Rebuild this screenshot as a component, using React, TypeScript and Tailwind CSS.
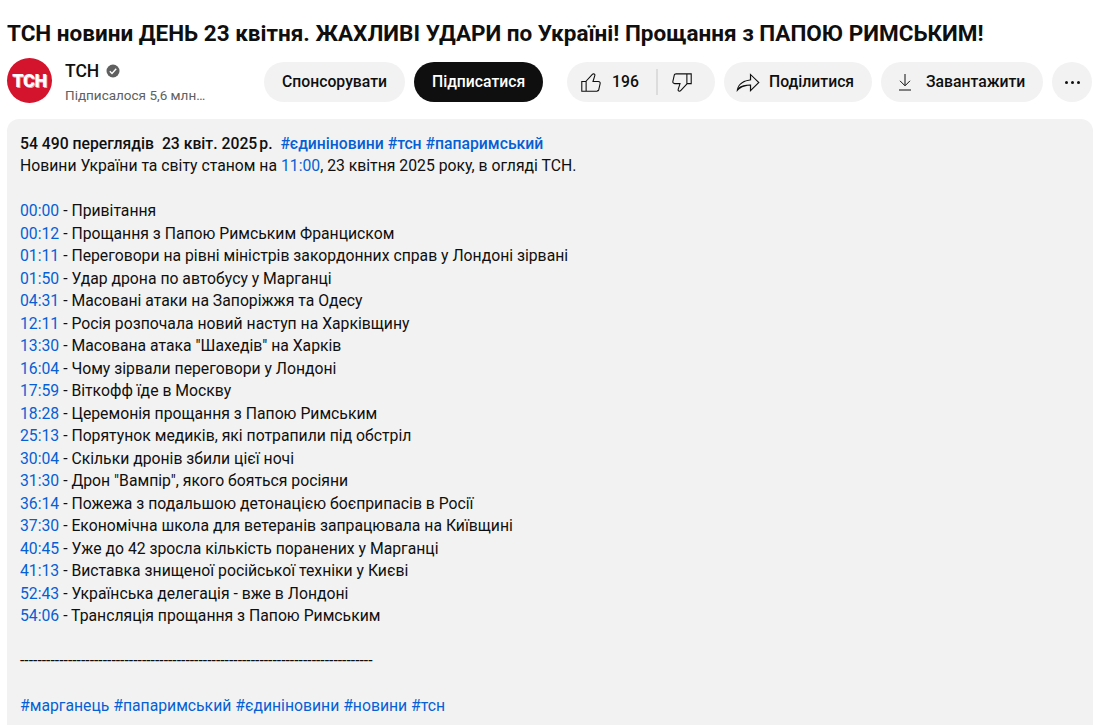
import React from "react";

const chapters: [string, string][] = [
  ["00:00", "Привітання"],
  ["00:12", "Прощання з Папою Римським Франциском"],
  ["01:11", "Переговори на рівні міністрів закордонних справ у Лондоні зірвані"],
  ["01:50", "Удар дрона по автобусу у Марганці"],
  ["04:31", "Масовані атаки на Запоріжжя та Одесу"],
  ["12:11", "Росія розпочала новий наступ на Харківщину"],
  ["13:30", "Масована атака \"Шахедів\" на Харків"],
  ["16:04", "Чому зірвали переговори у Лондоні"],
  ["17:59", "Віткофф їде в Москву"],
  ["18:28", "Церемонія прощання з Папою Римським"],
  ["25:13", "Порятунок медиків, які потрапили під обстріл"],
  ["30:04", "Скільки дронів збили цієї ночі"],
  ["31:30", "Дрон \"Вампір\", якого бояться росіяни"],
  ["36:14", "Пожежа з подальшою детонацією боєприпасів в Росії"],
  ["37:30", "Економічна школа для ветеранів запрацювала на Київщині"],
  ["40:45", "Уже до 42 зросла кількість поранених у Марганці"],
  ["41:13", "Виставка знищеної російської техніки у Києві"],
  ["52:43", "Українська делегація - вже в Лондоні"],
  ["54:06", "Трансляція прощання з Папою Римським"],
];

const LikeIcon = () => (
  <svg width="26" height="26" viewBox="0 0 24 24" fill="#0f0f0f">
    <path d="M18.77,11h-4.23l1.52-4.94C16.38,5.03,15.54,4,14.38,4c-0.58,0-1.14,0.24-1.52,0.65L7,11H3v10h4h1h9.43c1.06,0,1.98-0.67,2.19-1.61l1.34-6C21.23,12.15,20.18,11,18.77,11z M7,20H4v-8h3V20z M19.98,13.17l-1.34,6C18.54,19.65,18.03,20,17.43,20H8v-8.61l5.6-6.06C13.79,5.12,14.08,5,14.38,5c0.26,0,0.5,0.11,0.63,0.3c0.07,0.1,0.15,0.26,0.09,0.47l-1.52,4.94L13.18,12h1.35h4.23c0.41,0,0.8,0.17,1.03,0.46C19.92,12.61,20.05,12.86,19.98,13.17z" />
  </svg>
);

const DislikeIcon = () => (
  <svg width="26" height="26" viewBox="0 0 24 24" fill="#0f0f0f">
    <path d="M17,4h-1H6.57C5.5,4,4.59,4.67,4.38,5.61l-1.34,6C2.77,12.85,3.82,14,5.23,14h4.23l-1.52,4.94C7.62,19.97,8.46,21,9.62,21c0.58,0,1.14-0.24,1.52-0.65L17,14h4V4H17z M10.4,19.67C10.21,19.88,9.92,20,9.62,20c-0.26,0-0.5-0.11-0.63-0.3c-0.07-0.1-0.15-0.26-0.09-0.47l1.52-4.94l0.4-1.29H9.46H5.23c-0.41,0-0.8-0.17-1.03-0.46c-0.12-0.15-0.25-0.4-0.18-0.72l1.34-6C5.46,5.35,5.97,5,6.57,5H16v8.61L10.4,19.67z M20,13h-3V5h3V13z" />
  </svg>
);

export default function App() {
  return (
    <div className="w-[1107px] h-[725px] overflow-hidden bg-white font-['Roboto',sans-serif] text-[#0f0f0f]">
      <h1 className="pl-[7px] pt-[19px] text-[22.5px] leading-[28px] font-bold whitespace-nowrap">
        ТСН новини ДЕНЬ 23 квітня. ЖАХЛИВІ УДАРИ по Україні! Прощання з ПАПОЮ РИМСЬКИМ!
      </h1>
      <div className="flex items-center pl-[7px] pr-[15px] mt-[11px] h-[48px]">
        <div className="self-start w-[45px] h-[45px] rounded-full bg-[#d4132c] flex items-center justify-center shrink-0">
          <span className="text-white font-black text-[18px] leading-none tracking-[-0.4px] [text-shadow:1px_1px_0_#f3a6b0]">ТСН</span>
        </div>
        <div className="self-start mt-[1px] ml-[14px] w-[190px] shrink-0">
          <div className="flex items-center gap-[7px] h-[24px] -ml-[1px]">
            <span className="text-[17.5px] font-medium leading-[24px]">ТСН</span>
            <svg width="14" height="14" viewBox="0 0 14 14">
              <circle cx="7" cy="7" r="6.5" fill="#606060" />
              <path d="M3.8 7.2 6 9.4l4.2-4.6" fill="none" stroke="#fff" strokeWidth="1.4" />
            </svg>
          </div>
          <div className="text-[13.5px] leading-[18px] text-[#606060] mt-[3px] -ml-[1px]">Підписалося 5,6 млн…</div>
        </div>
        <button className="h-[40px] ml-[8px] px-[18px] rounded-full bg-[#f2f2f2] text-[15.75px] font-medium whitespace-nowrap">Спонсорувати</button>
        <button className="h-[40px] ml-[9px] px-[18px] rounded-full bg-[#0f0f0f] text-white text-[15.75px] font-medium whitespace-nowrap">Підписатися</button>
        <div className="ml-auto flex items-center gap-[9px]">
          <div className="flex items-center h-[40px] w-[148px] rounded-full bg-[#f2f2f2]">
            <span className="ml-[11px] flex"><LikeIcon /></span>
            <span className="ml-[8px] text-[15.75px] font-medium w-[44px]">196</span>
            <span className="w-[2px] h-[26px] bg-[#dcdcdc]" />
            <span className="ml-[11px] flex"><DislikeIcon /></span>
          </div>
          <button className="flex items-center h-[40px] w-[148px] pl-[9px] rounded-full bg-[#f2f2f2] text-[15.75px] font-medium">
            <svg width="29" height="25" viewBox="0 0 24 24" preserveAspectRatio="none" fill="#0f0f0f">
              <path d="M15,5.63L20.66,12L15,18.37V14h-1c-3.96,0-7.14,1-9.75,3.09c1.84-4.07,5.11-6.4,9.89-7.1L15,9.86V5.63 M14,3v6C6,10.17,3.25,15.17,3,21c2.83-4,6-6,11-6v6l8-9L14,3L14,3z" />
            </svg>
            <span className="ml-[7px]">Поділитися</span>
          </button>
          <button className="flex items-center h-[40px] w-[162px] pl-[12px] rounded-full bg-[#f2f2f2] text-[15.75px] font-medium">
            <svg width="24" height="24" viewBox="0 0 24 24" fill="none" stroke="#0f0f0f" strokeWidth="1">
              <path d="M12 4v11.5M7 10.8l5 5 5-5M6 20h12" />
            </svg>
            <span className="ml-[9px]">Завантажити</span>
          </button>
          <button className="flex items-center justify-center gap-[3px] w-[40px] h-[40px] rounded-full bg-[#f2f2f2]">
            <span className="w-[3px] h-[3px] rounded-full bg-[#0f0f0f]" />
            <span className="w-[3px] h-[3px] rounded-full bg-[#0f0f0f]" />
            <span className="w-[3px] h-[3px] rounded-full bg-[#0f0f0f]" />
          </button>
        </div>
      </div>
      <div className="mx-[7px] mt-[13px] w-[1086px] h-[606px] rounded-t-[12px] bg-[#f2f2f2] px-[13px] pt-[13.5px] text-[15.75px] leading-[22.5px]">
        <div className="font-medium whitespace-pre">
          54 490 переглядів  23 квіт. 2025<span className="ml-[2px]">р.</span>  <span className="text-[#065fd4]">#єдиніновини #тсн #папаримський</span>
        </div>
        <div>
          Новини України та світу станом на <span className="text-[#065fd4]">11:00</span>, 23 квітня 2025 року, в огляді ТСН.
        </div>
        <div className="h-[22.5px]" />
        {chapters.map(([t, s]) => (
          <div key={t} className="whitespace-nowrap">
            <span className="text-[#065fd4]">{t}</span> - {s}
          </div>
        ))}
        <div className="h-[22.5px]" />
        <div className="whitespace-nowrap">{"-".repeat(81)}</div>
        <div className="h-[22.5px]" />
        <div className="text-[#065fd4]">#марганець #папаримський #єдиніновини #новини #тсн</div>
      </div>
    </div>
  );
}
